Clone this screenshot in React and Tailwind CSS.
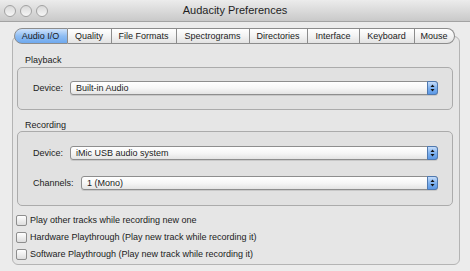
import React from 'react';

const tabs = [
  { label: 'Audio I/O', w: 'w-[54px]', active: true },
  { label: 'Quality', w: 'w-[44px]' },
  { label: 'File Formats', w: 'w-[65px]' },
  { label: 'Spectrograms', w: 'w-[73px]' },
  { label: 'Directories', w: 'w-[58px]' },
  { label: 'Interface', w: 'w-[52px]' },
  { label: 'Keyboard', w: 'w-[55px]' },
  { label: 'Mouse', w: 'w-[40px]' },
];

function Tab({ label, w, active, first, last }) {
  return (
    <div
      className={`${w} h-[16px] flex items-center justify-center border-y border-r border-[#8c8c8c] ${
        first ? 'border-l rounded-l-[8px]' : ''
      } ${last ? 'rounded-r-[8px]' : ''} ${
        active
          ? 'bg-gradient-to-b from-[#cfe3fb] via-[#8fbdf3] to-[#6fa9ee] border-[#5a7fb0]'
          : 'bg-gradient-to-b from-[#ffffff] via-[#f3f3f3] to-[#e2e2e2]'
      }`}
    >
      <span className="leading-none">{label}</span>
    </div>
  );
}

function Select({ value }) {
  return (
    <div className="flex-1 h-[14px] flex items-stretch rounded-[3px] border border-[#8e8e8e] bg-gradient-to-b from-[#ffffff] via-[#f7f7f7] to-[#e4e4e4] shadow-[0_1px_0_#c8c8c8]">
      <div className="flex-1 flex items-center pl-[5px] leading-none">{value}</div>
      <div className="w-[11px] -my-px -mr-px rounded-r-[3px] border border-[#4f79b0] bg-gradient-to-b from-[#c6ddfa] via-[#7fb2ef] to-[#5b98e6] flex items-center justify-center">
        <svg width="5" height="8" viewBox="0 0 5 8">
          <path d="M2.5 0.5 L4.5 3 L0.5 3 Z" fill="#111" />
          <path d="M2.5 7.5 L4.5 5 L0.5 5 Z" fill="#111" />
        </svg>
      </div>
    </div>
  );
}

function Field({ label, lw, value }) {
  return (
    <div className="flex items-start">
      <span className={`${lw} h-[14px] leading-[14px]`}>{label}</span>
      <Select value={value} />
    </div>
  );
}

function Check({ label }) {
  return (
    <div className="flex items-center gap-[3px] h-[11px]">
      <div className="w-[11px] h-[11px] rounded-[2px] border border-[#8e8e8e] bg-gradient-to-b from-[#ffffff] to-[#dedede]" />
      <span className="leading-none">{label}</span>
    </div>
  );
}

export default function App() {
  return (
    <div
      className="w-[470px] h-[271px] overflow-hidden bg-[#ececec] text-[9px] text-[#1b1b1b]"
      style={{ fontFamily: '"Liberation Sans", Arial, sans-serif' }}
    >
      {/* title bar */}
      <div className="h-[22px] grid grid-cols-[1fr_auto_1fr] items-center bg-gradient-to-b from-[#ececec] to-[#c9c9c9] border-b border-[#a3a3a3]">
        <div className="flex gap-[4px] pl-[4px]">
          {[0, 1, 2].map((i) => (
            <div
              key={i}
              className="w-[12px] h-[12px] rounded-full border border-[#a2a2a2] bg-gradient-to-b from-[#d9d9d9] to-[#f6f6f6]"
            />
          ))}
        </div>
        <div className="text-[11px] text-[#1e1e1e] leading-none">Audacity Preferences</div>
        <div />
      </div>

      {/* tabs + pane */}
      <div className="ml-[12px] w-[448px] pt-[6px]">
        <div className="relative z-10 flex justify-center pr-[4px]">
          {tabs.map((t, i) => (
            <Tab key={t.label} {...t} first={i === 0} last={i === tabs.length - 1} />
          ))}
        </div>
        <div className="-mt-[8px] h-[229px] rounded-[6px] border border-[#b4b4b4] bg-[#e6e6e6] pl-[4px] pt-[17px]">
          <div className="pl-[8px] h-[13px] leading-[13px]">Playback</div>
          <div className="w-[436px] h-[43px] rounded-[5px] border border-[#ababab] bg-[#e1e1e1] pt-[13px] pl-[15px] pr-[14px]">
            <Field label="Device:" lw="w-[37px]" value="Built-in Audio" />
          </div>

          <div className="pl-[8px] h-[12px] leading-[12px] mt-[9px]">Recording</div>
          <div className="w-[436px] h-[75px] rounded-[5px] border border-[#ababab] bg-[#e1e1e1] pt-[14px] pl-[15px] pr-[14px] flex flex-col gap-[16px]">
            <Field label="Device:" lw="w-[37px]" value="iMic USB audio system" />
            <Field label="Channels:" lw="w-[48px]" value="1 (Mono)" />
          </div>

          <div className="mt-[9px] flex flex-col gap-[6px] -ml-[1px]">
            <Check label="Play other tracks while recording new one" />
            <Check label="Hardware Playthrough (Play new track while recording it)" />
            <Check label="Software Playthrough (Play new track while recording it)" />
          </div>
        </div>
      </div>
    </div>
  );
}
